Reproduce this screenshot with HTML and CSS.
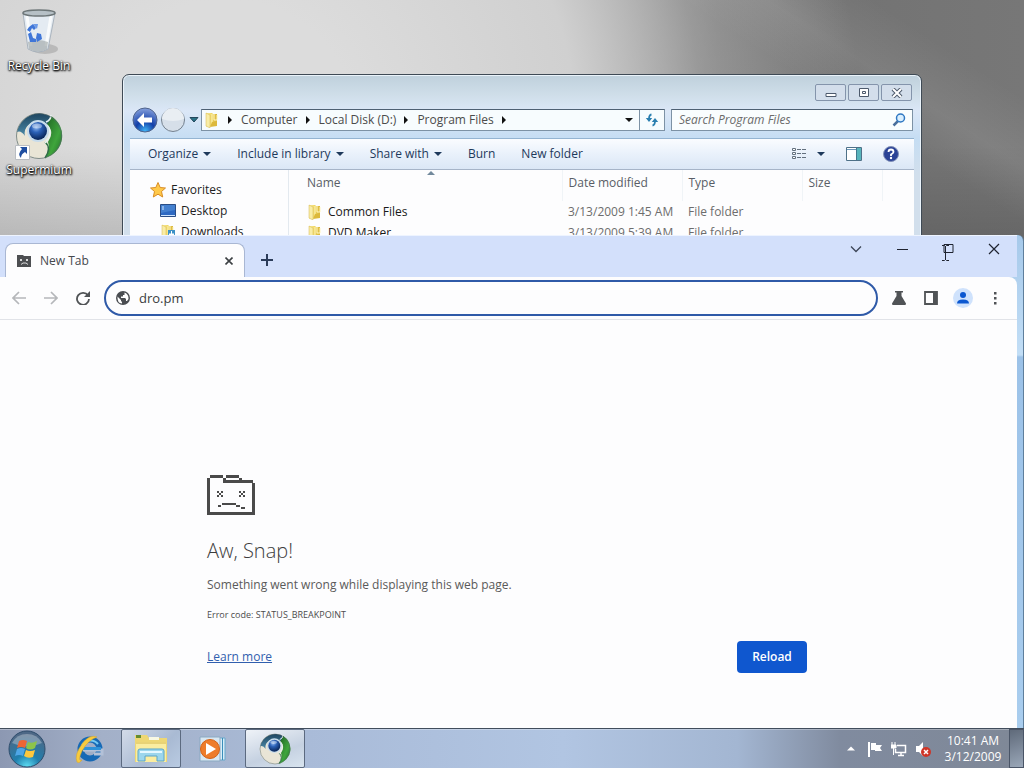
FILE: index.html
```html
<!DOCTYPE html>
<html lang="en">
<head>
  <meta charset="UTF-8">
  <meta name="viewport" content="width=device-width, initial-scale=1.0">
  <title>New Tab</title>
  <link rel="stylesheet" href="styles.css">
</head>
<body>
  <!-- shared icons -->
  <svg class="defs" width="0" height="0" aria-hidden="true">
    <defs>
      <radialGradient id="ball" cx="40%" cy="30%" r="70%"><stop offset="0" stop-color="#8fb8f0"/><stop offset=".4" stop-color="#2c62b8"/><stop offset="1" stop-color="#082456"/></radialGradient>
      <linearGradient id="green" x1="0" y1="0" x2="1" y2="1"><stop offset="0" stop-color="#1d5f22"/><stop offset=".6" stop-color="#3fa53c"/><stop offset="1" stop-color="#1e6a24"/></linearGradient>
      <linearGradient id="teal" x1="0" y1="0" x2="0" y2="1"><stop offset="0" stop-color="#1d4560"/><stop offset="1" stop-color="#4c8aa8"/></linearGradient>
      <linearGradient id="fold" x1="0" y1="0" x2="1" y2="0"><stop offset="0" stop-color="#fbf0a8"/><stop offset=".5" stop-color="#f0d766"/><stop offset="1" stop-color="#d9b43a"/></linearGradient>
      <radialGradient id="orb" cx="50%" cy="100%" r="90%"><stop offset="0" stop-color="#5fe0f5"/><stop offset=".4" stop-color="#1f7fae"/><stop offset="1" stop-color="#4d6886"/></radialGradient>
      <radialGradient id="navblue" cx="50%" cy="95%" r="90%"><stop offset="0" stop-color="#3fb4f5"/><stop offset=".45" stop-color="#123fa8"/><stop offset="1" stop-color="#7c98d8"/></radialGradient>
    </defs>
    <symbol id="supermium" viewBox="0 0 48 48">
      <circle cx="24" cy="24" r="23" fill="#e9e5d6"/>
      <path d="M2 20A23 23 0 0 1 37 5L34 14Q26 6 16 11Q8 16 10 24Q6 18 2 20Z" fill="url(#teal)"/>
      <path d="M36 4A23 23 0 0 1 30 46Q36 39 33 30Q40 20 32 12Q35 9 36 4Z" fill="url(#green)"/>
      <path d="M30 46Q37 36 30 30" fill="none" stroke="#2f6f46" stroke-width="1.5"/>
      <path d="M31 10Q36 8 36 3M32 13Q39 22 30 31" fill="none" stroke="#e8f2f0" stroke-width="1.5"/>
      <circle cx="23" cy="19" r="11" fill="#c7dcec"/>
      <circle cx="23" cy="19" r="9" fill="url(#ball)"/>
      <ellipse cx="22" cy="14" rx="5" ry="2.5" fill="#fff" opacity=".4"/>
      <circle cx="24" cy="24" r="22.5" fill="none" stroke="#52666a" opacity=".7"/>
    </symbol>
    <symbol id="folder" viewBox="0 0 16 16">
      <path d="M2 1H8L9 2H13V14H4L2 15Z" fill="url(#fold)"/>
      <path d="M2 1L6 3V16L2 14Z" fill="#f9eda6" stroke="#d5b74e" stroke-width=".5"/>
      <path d="M8 2V13M10 2V8H13V3" fill="none" stroke="#fff6bc"/>
      <path d="M6 15L13 14V9L8 10Z" fill="#dcb93c"/>
    </symbol>
  </svg>

  <main class="desktop">
    <ul class="shortcuts">
      <li>
        <svg width="40" height="48" viewBox="0 0 40 48">
          <ellipse cx="26" cy="41" rx="13" ry="5" fill="#999" opacity=".5"/>
          <path d="M4 5L9 41Q19 47 29 41L36 5Z" fill="#e4ebf2" stroke="#aab4be"/>
          <path d="M8 8L12 38M32 8L27 38" stroke="#fff" stroke-width="3" opacity=".8"/>
          <path d="M9 34Q18 30 29 34L28 41Q19 46 10 41Z" fill="#9fa7a8" opacity=".65"/>
          <ellipse cx="20" cy="5" rx="16" ry="3" fill="#b6c0c6" stroke="#6d7678" stroke-width="1.5"/>
          <path d="M10 19L14 16L17 20L15 22L13 20L11 24L8 22ZM9 26L12 24L14 30L17 31V34H11ZM18 25L22 26L23 31L18 34L17 30Z" fill="#3f76d8"/>
          <path d="M14 16H19L18 21Z" fill="#6c9ae6"/>
        </svg>
        <span>Recycle Bin</span>
      </li>
      <li>
        <span class="shortcut-icon">
          <svg width="48" height="48"><use href="#supermium"/></svg>
          <svg class="arrow" width="15" height="15" viewBox="0 0 15 15"><path d="M.5.5h14v14H.5z" fill="#fff" stroke="#b9bdc2"/><path d="M5 2H12V9L10 7Q6 9 6 13Q2 9 7 4Z" fill="#1f4ea0"/></svg>
        </span>
        <span>Supermium</span>
      </li>
    </ul>

    <section class="explorer" aria-label="Program Files">
      <div class="explorer-title">
        <button aria-label="Minimize"><svg width="12" height="10" viewBox="0 0 12 10"><path d="M1 5.5h10v3H1z" fill="#fff" stroke="#4d5a6c"/></svg></button>
        <button aria-label="Maximize"><svg width="12" height="10" viewBox="0 0 12 10"><path d="M1.500.500h9v8h-9zM4.500 3.500h3v2h-3z" fill="#fff" stroke="#4d5a6c"/></svg></button>
        <button aria-label="Close"><svg width="12" height="10" viewBox="0 0 12 10"><path d="M2 1l8 8M10 1L2 9" stroke="#4d5a6c" stroke-width="4"/><path d="M2 1l8 8M10 1L2 9" stroke="#fff" stroke-width="2"/></svg></button>
      </div>

      <div class="address-row">
        <button class="nav" aria-label="Back"><svg width="26" height="26" viewBox="0 0 26 26"><circle cx="13" cy="13" r="12" fill="url(#navblue)" stroke="#50648c"/><path d="M5 13L12 6V10.500H20V15.500H12V20Z" fill="#fff"/></svg></button>
        <button class="nav" aria-label="Forward"><svg width="26" height="26" viewBox="0 0 26 26"><circle cx="13" cy="13" r="11.500" fill="#d6dfe9" stroke="#74818f"/><path d="M2 12A11 11 0 0 1 24 12Q13 16 2 12Z" fill="#e9eef3"/></svg></button>
        <button class="recent" aria-label="Recent pages"><svg width="10" height="6" viewBox="0 0 10 6"><path d="M1 .5H9L5 5Z" fill="#287286" stroke="#23465c"/></svg></button>
        <div class="address">
          <svg width="16" height="16"><use href="#folder"/></svg>
          <i class="sep"></i><a href="#">Computer</a>
          <i class="sep"></i><a href="#">Local Disk (D:)</a>
          <i class="sep"></i><a href="#">Program Files</a>
          <i class="sep"></i>
          <button class="history" aria-label="Previous locations"><i class="caret"></i></button>
          <button class="refresh" aria-label="Refresh"><svg width="14" height="14" viewBox="0 0 14 14"><path d="M6.500 1.500Q4 2 4 6M7.500 12.500Q10 12 10 8" fill="none" stroke="#2b7fb0" stroke-width="1.800"/><path d="M.8 5h6.400L4 9zM6.800 9L10 5l3.200 4z" fill="#2b7fb0"/></svg></button>
        </div>
        <label class="search">
          <input type="text" placeholder="Search Program Files" aria-label="Search Program Files">
          <svg width="14" height="14" viewBox="0 0 14 14"><path d="M6 8L1.500 12.500" stroke="#4a6f9c" stroke-width="2.500"/><circle cx="8.500" cy="5" r="4" fill="#d9efff" stroke="#2f77c2" stroke-width="1.500"/></svg>
        </label>
      </div>

      <div class="commands">
        <button>Organize <i class="caret"></i></button>
        <button>Include in library <i class="caret"></i></button>
        <button>Share with <i class="caret"></i></button>
        <button>Burn</button>
        <button>New folder</button>
        <div class="view-tools">
          <button aria-label="Change your view"><svg width="16" height="14" viewBox="0 0 16 14"><path d="M1.500 1.500h3v2h-3zM1.500 5.500h3v2h-3zM1.500 9.500h3v2h-3z" fill="#fff" stroke="#63707e"/><path d="M6 2.500h4M11 2.500h4M6 6.500h4M11 6.500h4M6 10.500h4M11 10.500h4" stroke="#63707e"/></svg></button>
          <button aria-label="More options"><i class="caret"></i></button>
          <button aria-label="Show the preview pane"><svg width="16" height="14" viewBox="0 0 16 14"><path d="M.500.500h15v13H.500z" fill="#fff" stroke="#4e7188"/><path d="M1 2.500h9" stroke="#6b96b8"/><path d="M10 1h5v12h-5z" fill="#57b4bb"/><path d="M10.500 1v12" stroke="#42788c"/></svg></button>
          <button aria-label="Get help"><svg width="16" height="16" viewBox="0 0 16 16"><circle cx="8" cy="8" r="7.500" fill="#2a4296" stroke="#8190b8"/><path d="M5.500 6Q5.500 3.500 8 3.500T10.500 6Q10.500 7 8 8.500V10" fill="none" stroke="#fff" stroke-width="1.800"/><circle cx="8" cy="12" r="1.200" fill="#fff"/></svg></button>
        </div>
      </div>

      <div class="explorer-body">
        <ul class="tree">
          <li><svg width="16" height="16" viewBox="0 0 16 16"><path d="M8 .5l2.200 5 5.300.5-4 3.500 1.200 5.500L8 12.200 3.300 15l1.200-5.500L.500 6l5.300-.5z" fill="#ffc94a" stroke="#d88c25"/></svg>Favorites</li>
          <li class="child"><svg width="16" height="13" viewBox="0 0 16 13"><path d="M.500.500h15v12H.500z" fill="#2e69c2" stroke="#2a4d85"/><path d="M1 1h14v5L1 9z" fill="#4480cf"/><path d="M2 3h2M2 5h2M1 11.500h14" stroke="#cfe5ff"/></svg>Desktop</li>
          <li class="child"><svg width="16" height="16" viewBox="0 0 16 16"><use href="#folder"/><path d="M8 6h7v8H8z" fill="#3c91c6"/><path d="M11.500 7v4M9 10l2.500 3 2.500-3z" fill="#fff" stroke="#fff"/></svg>Downloads</li>
        </ul>
        <div class="files">
          <table>
            <thead>
              <tr><th class="col-name">Name<i class="sorted"></i></th><th class="col">Date modified</th><th class="col">Type</th><th class="col-size">Size</th><th></th></tr>
            </thead>
            <tbody>
              <tr><td><span class="file"><svg width="16" height="16"><use href="#folder"/></svg>Common Files</span></td><td>3/13/2009 1:45 AM</td><td>File folder</td><td></td><td></td></tr>
              <tr><td><span class="file"><svg width="16" height="16"><use href="#folder"/></svg>DVD Maker</span></td><td>3/13/2009 5:39 AM</td><td>File folder</td><td></td><td></td></tr>
            </tbody>
          </table>
        </div>
      </div>
    </section>

    <section class="browser" aria-label="Supermium">
      <div class="tabstrip">
        <div class="tab">
          <svg width="14" height="12" viewBox="0 0 14 12"><path d="M0 0h6l1 1h7v11H0z" fill="#4d4f52"/><path d="M3 4l2 2M5 4L3 6M9 4l2 2M11 4L9 6M4 9.500l2-1.500h3l2 1.500" fill="none" stroke="#fff" stroke-width=".8"/></svg>
          <span>New Tab</span>
          <button aria-label="Close tab"><svg width="8" height="8" viewBox="0 0 8 8"><path d="M.5.5l7 7M7.500.5l-7 7" stroke="#3c4043" stroke-width="1.600"/></svg></button>
        </div>
        <button class="new-tab" aria-label="New tab"><svg width="12" height="12" viewBox="0 0 12 12"><path d="M6 0v12M0 6h12" stroke="#2b3c59" stroke-width="2"/></svg></button>
        <div class="window-buttons">
          <button aria-label="Search tabs"><svg width="12" height="12" viewBox="0 0 12 12"><path d="M1 3.500l5 5 5-5" fill="none" stroke="#3c4657" stroke-width="1.300"/></svg></button>
          <button aria-label="Minimize"><svg width="11" height="12" viewBox="0 0 11 12"><path d="M0 6.500h11" stroke="#1f2430"/></svg></button>
          <button aria-label="Maximize"><svg width="11" height="12" viewBox="0 0 11 12"><path d="M1 1.500h9v8H1z" fill="none" stroke="#1f2430"/></svg></button>
          <button aria-label="Close"><svg width="12" height="12" viewBox="0 0 12 12"><path d="M1 1l10 10M11 1L1 11" stroke="#1f2430" stroke-width="1.200"/></svg></button>
        </div>
      </div>

      <div class="toolbar">
        <button class="off" aria-label="Back"><svg width="14" height="14" viewBox="0 0 14 14"><path d="M14 7H1M7 1L1 7l6 6" fill="none" stroke="currentColor" stroke-width="1.700"/></svg></button>
        <button class="off" aria-label="Forward"><svg width="14" height="14" viewBox="0 0 14 14"><path d="M0 7h13M7 1l6 6-6 6" fill="none" stroke="currentColor" stroke-width="1.700"/></svg></button>
        <button aria-label="Reload"><svg width="14" height="14" viewBox="0 0 14 14"><path d="M12 4.500A6 6 0 1 0 13 8" fill="none" stroke="currentColor" stroke-width="1.800"/><path d="M14 0v6H8z" fill="currentColor"/></svg></button>
        <label class="omnibox">
          <svg width="14" height="14" viewBox="0 0 14 14"><circle cx="7" cy="7" r="7" fill="#4a4d51"/><path d="M1.500 5.500L5 9v1l1 1v1.600Q1 12 1.500 5.500ZM8.500 1.500Q12.800 3 12.500 8L11 10H10V8L9 7H5V5.500H7V4H8.500Z" fill="#fff"/></svg>
          <input type="text" value="dro.pm" aria-label="Address and search bar">
        </label>
        <button aria-label="Experiments"><svg width="14" height="14" viewBox="0 0 14 14"><path d="M3 0h8v1.500H9.500V5L14 12.500Q14 14 13 14H1Q0 14 0 12.500L4.500 5V1.500H3Z" fill="currentColor"/></svg></button>
        <button aria-label="Side panel"><svg width="14" height="14" viewBox="0 0 14 14"><path d="M1 1h12v12H1z" fill="none" stroke="currentColor" stroke-width="1.800"/><path d="M9 1h4v12H9z" fill="currentColor"/></svg></button>
        <button aria-label="Profile"><svg width="20" height="20" viewBox="0 0 20 20"><circle cx="10" cy="10" r="10" fill="#cfe2fc"/><circle cx="10" cy="7" r="3" fill="#0b57d0"/><path d="M4 15.500Q4 11.500 10 11.500T16 15.500Z" fill="#0b57d0"/></svg></button>
        <button aria-label="Menu"><svg width="4" height="14" viewBox="0 0 4 14"><path d="M1 1h2.500v2.500H1zM1 6h2.500v2.500H1zM1 11h2.500v2.500H1z" fill="currentColor"/></svg></button>
      </div>

      <div class="page">
        <div class="error">
          <svg width="48" height="40" viewBox="0 0 48 40" shape-rendering="crispEdges"><path d="M3 0h13v3H3zM0 3h3v37H0zM16 3h3v3h-3zM19 0h13v3H19zM32 3h3v3h-3zM16 5h30v3H16zM45 8h3v32h-3zM0 37h48v3H0zM10 16h2v2h-2zM14 16h2v2h-2zM12 18h2v2h-2zM10 20h2v2h-2zM14 20h2v2h-2zM32 16h2v2h-2zM36 16h2v2h-2zM34 18h2v2h-2zM32 20h2v2h-2zM36 20h2v2h-2zM11 30h3v2h-3zM15 28h14v2H15zM29 30h4v2h-4zM34 32h4v2h-4z" fill="#4a4a4a"/></svg>
          <h1>Aw, Snap!</h1>
          <p>Something went wrong while displaying this web page.</p>
          <p class="code">Error code: STATUS_BREAKPOINT</p>
          <div class="actions">
            <a href="#">Learn more</a>
            <button>Reload</button>
          </div>
        </div>
      </div>
    </section>

    <svg class="cursor" width="9" height="18" viewBox="0 0 9 18"><path d="M1 1.500h2.500l1 1 1-1H8M4.500 2v14M1 16.500h2.500l1-1 1 1H8" fill="none" stroke="#1f2430"/></svg>
  </main>

  <footer class="taskbar">
    <button class="start" aria-label="Start">
      <svg width="38" height="38" viewBox="0 0 38 38">
        <circle cx="19" cy="19" r="18" fill="url(#orb)" stroke="#2f4d6c"/>
        <path d="M4 13A17 17 0 0 1 34 13Q19 20 4 13Z" fill="#fff" opacity=".3"/>
        <path d="M11 11Q15 9 19 11L17 18Q13 16 9 18Z" fill="#ee6534"/>
        <path d="M20 12Q24 14 29 11L27 18Q22 21 18 18Z" fill="#8dc44a"/>
        <path d="M9 19Q13 17 17 19L15 26Q11 24 7 26Z" fill="#4fa6e6"/>
        <path d="M18 20Q22 22 27 20L25 27Q20 29 16 26Z" fill="#ffc83c"/>
      </svg>
    </button>
    <button class="task" aria-label="Internet Explorer">
      <svg width="30" height="30" viewBox="0 0 30 30">
        <circle cx="16" cy="15" r="9.500" fill="none" stroke="#1769b5" stroke-width="6"/>
        <path d="M9 16H28V20H20" fill="none" stroke="#b3c1d8" stroke-width="3"/>
        <path d="M9 14.500H27" stroke="#2f92d8" stroke-width="3"/>
        <path d="M8 11A10 10 0 0 1 24 10" fill="none" stroke="#74c8f2" stroke-width="2"/>
        <path d="M23 3Q15 0 8 10Q0 21 3 28Q5 30 8 26Q3 28 8 17Q14 6 23 3Z" fill="#f7cb3f" stroke="#d9a226" stroke-width=".5"/>
      </svg>
    </button>
    <button class="task open" aria-label="Windows Explorer">
      <svg width="32" height="30" viewBox="0 0 32 30">
        <path d="M0 1h12l2 3h18v24H0z" fill="#eed774"/><path d="M1 1h5v3H1z" fill="#648b30"/><path d="M14 3h10v3H14z" fill="#f8f8e4"/>
        <path d="M1 8h30v20H1z" fill="#fbeda0"/><path d="M1 9h30" stroke="#d6b84c"/>
        <path d="M3 27V17Q3 15 5 15H27Q29 15 29 17V27H22V22H10V27Z" fill="#9cd6ec" stroke="#5aa5c8"/>
        <path d="M5 18h22" stroke="#e5f8ff" stroke-width="2"/>
      </svg>
    </button>
    <button class="task" aria-label="Windows Media Player">
      <svg width="28" height="26" viewBox="0 0 28 26">
        <path d="M20 2h6v22h-6z" fill="#d8eef8" stroke="#69a9cc"/><path d="M23.500 2v22" stroke="#3b8dba"/>
        <path d="M1 1h20v24H1z" fill="#d8e7f2" stroke="#8ba9c2"/>
        <circle cx="11" cy="13" r="9.500" fill="#ee7c2b" stroke="#d46318"/><path d="M7 7l10 6-10 6z" fill="#fff"/>
      </svg>
    </button>
    <button class="task open active" aria-label="Supermium"><svg width="32" height="32"><use href="#supermium"/></svg></button>

    <div class="tray">
      <button aria-label="Show hidden icons"><svg width="8" height="5" viewBox="0 0 8 5"><path d="M0 4.500L4 .5l4 4z" fill="#fff"/></svg></button>
      <button aria-label="Action Center"><svg width="16" height="16" viewBox="0 0 16 16"><path d="M2 1v15" stroke="#fff" stroke-width="2"/><path d="M4 2h5v2h6l-2 3 2 3H8V9H4z" fill="#fff"/></svg></button>
      <button aria-label="Network"><svg width="16" height="16" viewBox="0 0 16 16"><path d="M6 4.500h8.500v7H4.500V8M7 14.500h6M10 12v3" fill="none" stroke="#fff" stroke-width="1.500"/><path d="M1 1v3M4 1v3M0 4h5v3H0zM2.500 7v7" fill="#fff" stroke="#fff"/></svg></button>
      <button aria-label="Volume"><svg width="16" height="16" viewBox="0 0 16 16"><path d="M1 5h3l4-4v14l-4-4H1z" fill="#fff"/><circle cx="11" cy="11" r="5" fill="#cf3527"/><path d="M9 9l4 4M13 9l-4 4" stroke="#fff" stroke-width="1.500"/></svg></button>
      <div class="clock"><span>10:41 AM</span><span>3/12/2009</span></div>
    </div>
    <button class="show-desktop" aria-label="Show desktop"></button>
  </footer>
</body>
</html>
```
FILE: styles.css
```css
* {
  box-sizing: border-box;
}
body {
  margin: 0;
  height: 100vh;
  display: flex;
  flex-direction: column;
  overflow: hidden;
  font-family: "Open Sans", "Noto Sans", sans-serif;
  font-size: 12px;
  line-height: 16px;
  color: #1e1e1e;
}
button {
  display: flex;
  align-items: center;
  justify-content: center;
  padding: 0;
  border: 0;
  background: none;
  font: inherit;
  color: inherit;
}
input {
  min-width: 0;
  padding: 0;
  border: 0;
  outline: 0;
  background: none;
  font: inherit;
  color: inherit;
}
ul {
  margin: 0;
  padding: 0;
  list-style: none;
}
svg {
  display: block;
  flex: none;
}
.defs {
  position: absolute;
}
.caret,
.sep {
  width: 0;
  height: 0;
  border: 4px solid transparent;
}
.caret {
  border-top-color: currentColor;
  border-bottom: 0;
}
.sep {
  border-left-color: #111;
  border-right: 0;
}

/* desktop */
.desktop {
  position: relative;
  flex: 1;
  background:
    linear-gradient(rgba(0, 0, 0, 0) 20%, rgba(0, 0, 0, 0.14) 33%),
    linear-gradient(33deg, transparent 84%, rgba(255, 255, 255, 0.08) 88%, transparent 93%),
    radial-gradient(ellipse 62% 80% at 22% 16%, #dcdcdc 20%, #d0d0d0 55%, rgba(190, 190, 190, 0.5) 75%, transparent 100%),
    linear-gradient(90deg, #b2b2b2, #a6a6a6 45%, #707070 70%, #777 100%);
}
.shortcuts {
  width: 78px;
  padding-top: 8px;
  display: flex;
  flex-direction: column;
  gap: 38px;
}
.shortcuts li {
  display: flex;
  flex-direction: column;
  align-items: center;
  gap: 2px;
  color: #fff;
  text-shadow: 0 1px 2px #000, 1px 1px 2px #000, 0 0 2px #000;
}
.shortcut-icon {
  position: relative;
}
.shortcut-icon .arrow {
  position: absolute;
  left: 0;
  bottom: 0;
}

/* explorer window */
.explorer {
  position: absolute;
  left: 122px;
  right: 102px;
  top: 74px;
  bottom: 100px;
  padding: 0 7px;
  display: flex;
  flex-direction: column;
  border: 1px solid #3f4a55;
  border-radius: 7px 7px 0 0;
  background: linear-gradient(#bfd0dc, #cfdee9 20px, #dbe7f7 36px, #c5ddf3 64px, #d2dfec 100px);
  box-shadow: inset 0 0 0 1px #eaf3fa;
}
.explorer-title {
  height: 34px;
  padding: 9px 2px 0 0;
  display: flex;
  justify-content: flex-end;
  gap: 2px;
}
.explorer-title button {
  width: 31px;
  height: 17px;
  border: 1px solid #8494ab;
  border-radius: 2px;
  background: #d3deeb;
}
.address-row {
  height: 22px;
  padding-right: 1px;
  display: flex;
  align-items: center;
}
.nav {
  width: 28px;
}
.nav:first-child {
  margin-left: 1px;
}
.recent {
  width: 14px;
}
.address {
  flex: 1;
  height: 22px;
  display: flex;
  align-items: center;
  padding-left: 2px;
  border: 1px solid #7d92a5;
  border-top-color: #4e6073;
  background: #f7fcfe;
}
.address a {
  margin-left: 9px;
  color: #4b4b4b;
  text-decoration: none;
}
.address .sep {
  margin-left: 8px;
}
.history {
  width: 20px;
  height: 20px;
  margin-left: auto;
  color: #111;
}
.refresh {
  width: 25px;
  height: 20px;
  border-left: 1px solid #7d92a5;
}
.search {
  width: 242px;
  height: 22px;
  margin-left: 6px;
  padding: 0 6px 0 7px;
  display: flex;
  align-items: center;
  border: 1px solid #7d92a5;
  border-top-color: #4e6073;
  background: #f9fdfe;
}
.search input {
  flex: 1;
}
.search input::placeholder {
  color: #6b6b6b;
  font-style: italic;
}
.commands {
  flex: none;
  height: 32px;
  margin-top: 7px;
  padding: 0 15px 0 18px;
  display: flex;
  align-items: center;
  gap: 26px;
  border-top: 1px solid #94b4d2;
  border-bottom: 1px solid #a6b4c8;
  background: linear-gradient(#fafcff, #e9f1fb 50%, #dbe7f6);
  color: #1e395b;
}
.commands button {
  gap: 5px;
}
.view-tools {
  margin-left: auto;
  display: flex;
  gap: 21px;
}
.view-tools button:first-child {
  margin-right: -11px;
}
.explorer-body {
  flex: 1;
  display: flex;
  background: #fdfdfe;
}
.tree {
  width: 159px;
  padding: 9px 0 0 20px;
  border-right: 1px solid #e3e9ef;
}
.tree li {
  height: 21px;
  display: flex;
  align-items: center;
  gap: 5px;
}
.tree .child {
  padding-left: 10px;
}
.files {
  flex: 1;
  padding-left: 12px;
}
table {
  width: 100%;
  table-layout: fixed;
  border-collapse: collapse;
  color: #6d6d6d;
}
th {
  position: relative;
  height: 31px;
  padding: 0 6px 5px;
  border-right: 1px solid #f0f4f7;
  font-weight: normal;
  text-align: left;
  color: #595e66;
}
th:last-child {
  border: 0;
}
td {
  height: 21px;
  padding: 0 6px;
  white-space: nowrap;
}
.col-name {
  width: 261px;
}
.col {
  width: 120px;
}
.col-size {
  width: 80px;
}
.sorted {
  position: absolute;
  top: 1px;
  left: 50%;
  margin-left: -4px;
  border: 4px solid transparent;
  border-top: 0;
  border-bottom-color: #72899c;
}
.file {
  display: flex;
  align-items: center;
  gap: 5px;
  color: #1a1a1a;
}

/* browser window */
.browser {
  position: absolute;
  left: 0;
  right: 0;
  top: 235px;
  bottom: 0;
  padding-right: 6px;
  display: flex;
  flex-direction: column;
  border-radius: 0 6px 0 0;
  border-right: 1px solid #5f7f9c;
  background: linear-gradient(#a6c9ea, #c2def6 120px, #9cc2e8 122px, #a9cdee);
}
.tabstrip {
  height: 42px;
  padding-left: 5px;
  display: flex;
  align-items: flex-end;
  border-top: 1px solid #eef4ff;
  background: #d3e0fb;
}
.tab {
  width: 240px;
  height: 34px;
  padding: 0 11px;
  display: flex;
  align-items: center;
  gap: 9px;
  border: 1px solid #a9b7d3;
  border-bottom: 0;
  border-radius: 8px 8px 0 0;
  background: #fdfdfe;
  color: #45484d;
}
.tab button {
  margin-left: auto;
}
.new-tab {
  width: 28px;
  height: 34px;
  margin-left: 8px;
}
.window-buttons {
  align-self: flex-start;
  margin-left: auto;
  display: flex;
}
.window-buttons button {
  width: 46px;
  height: 26px;
}
.toolbar {
  height: 43px;
  padding: 0 6px 0 3px;
  display: flex;
  align-items: center;
  border-bottom: 1px solid #e1e3e8;
  border-radius: 0 8px 0 0;
  background: #fdfdfe;
  color: #505356;
}
.toolbar button {
  width: 32px;
  height: 32px;
}
.toolbar .off {
  color: #b5b7ba;
}
.omnibox {
  flex: 1;
  height: 36px;
  margin: 0 5px;
  padding: 0 10px;
  display: flex;
  align-items: center;
  gap: 9px;
  border: 2px solid #2f5aa8;
  border-radius: 18px;
}
.omnibox input {
  flex: 1;
  font-size: 13px;
  color: #3a3c40;
}
.page {
  flex: 1;
  padding: 155px 3px 0 0;
  background: #fdfdfe;
}
.error {
  max-width: 600px;
  margin: 0 auto;
  color: #5a5a5a;
}
.error h1 {
  margin: 22px 0 12px;
  font-size: 20px;
  line-height: 28px;
  font-weight: 300;
  color: #3c3c3c;
}
.error p {
  margin: 0;
}
.error .code {
  margin: 14px 0 18px;
  font-size: 9px;
  color: #4c4c4c;
}
.actions {
  display: flex;
  align-items: center;
  justify-content: space-between;
}
.actions a {
  color: #315fae;
}
.actions button {
  width: 70px;
  height: 32px;
  border-radius: 4px;
  background: #0f57cf;
  color: #fff;
  font-weight: 600;
}
.cursor {
  position: absolute;
  left: 941px;
  top: 244px;
}

/* taskbar */
.taskbar {
  height: 40px;
  display: flex;
  border-top: 1px solid #414d5c;
  background: linear-gradient(90deg, #8c98b2, #a3b0c8 10%, #a9bbd8 30%, #b1c5e2 55%, #a3b6d2 72%, #808b9f 82%, #7f8897);
  box-shadow: inset 0 1px 0 rgba(255, 255, 255, 0.3);
}
.start {
  width: 54px;
  margin-right: 5px;
}
.task {
  width: 60px;
  margin-right: 2px;
}
.open {
  border: 1px solid #5c6a80;
  border-radius: 2px;
  background: linear-gradient(135deg, #d2dae8, #a9bad3 60%, #b9cbe2);
}
.active {
  background: linear-gradient(160deg, #eff3f8, #c5d1e1 60%, #d8e4ef);
}
.tray {
  margin-left: auto;
  padding-right: 2px;
  display: flex;
  align-items: center;
  gap: 8px;
  color: #fff;
}
.tray button:first-child {
  margin-right: 4px;
}
.clock {
  width: 68px;
  display: flex;
  flex-direction: column;
  align-items: center;
}
.show-desktop {
  width: 15px;
  height: 100%;
  border: 1px solid #4a5567;
  background: linear-gradient(160deg, #5f6a7a, #9aa7b8);
}
```
